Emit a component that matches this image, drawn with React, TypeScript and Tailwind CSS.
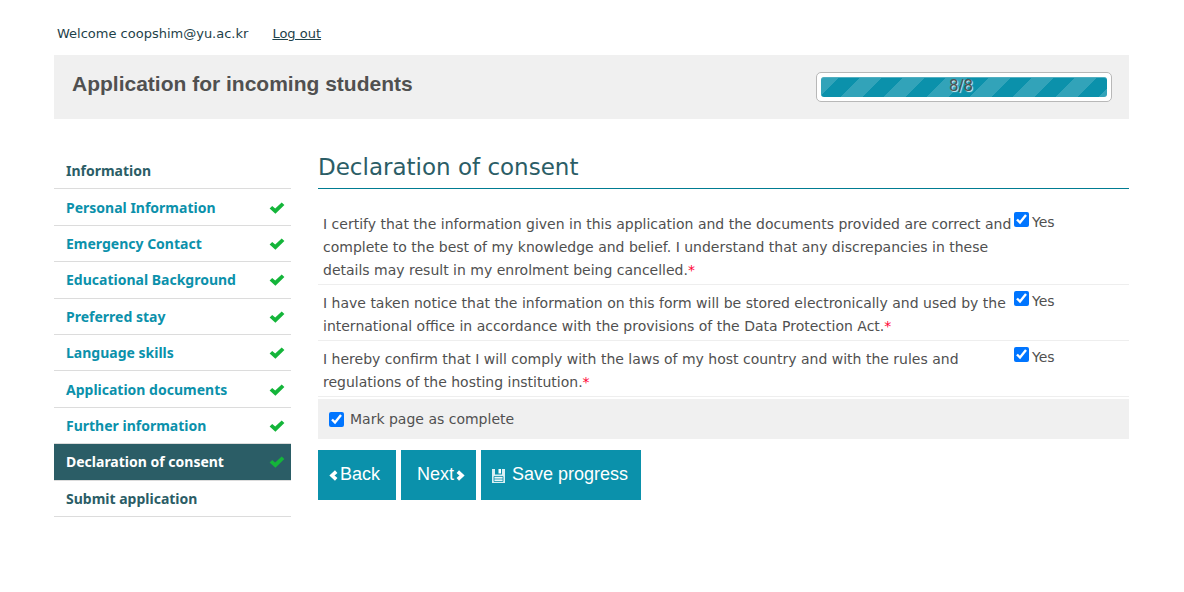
import React from "react";

const steps: { label: string; state: "plain" | "done" | "current" }[] = [
  { label: "Information", state: "plain" },
  { label: "Personal Information", state: "done" },
  { label: "Emergency Contact", state: "done" },
  { label: "Educational Background", state: "done" },
  { label: "Preferred stay", state: "done" },
  { label: "Language skills", state: "done" },
  { label: "Application documents", state: "done" },
  { label: "Further information", state: "done" },
  { label: "Declaration of consent", state: "current" },
  { label: "Submit application", state: "plain" },
];

const stepColors = {
  plain: "text-[#2b5d66]",
  done: "text-[#0b91ab]",
  current: "bg-[#2b5d66] text-white",
};

const consents = [
  {
    id: "consent-correct",
    text: "I certify that the information given in this application and the documents provided are correct and complete to the best of my knowledge and belief. I understand that any discrepancies in these details may result in my enrolment being cancelled.",
  },
  {
    id: "consent-data",
    text: "I have taken notice that the information on this form will be stored electronically and used by the international office in accordance with the provisions of the Data Protection Act.",
  },
  {
    id: "consent-laws",
    text: "I hereby confirm that I will comply with the laws of my host country and with the rules and regulations of the hosting institution.",
  },
];

function CheckMark() {
  return (
    <svg viewBox="0 0 16 12" className="mt-px h-3 w-4 shrink-0" aria-hidden="true">
      <path d="M0.6 6.4 3.2 4.1 6.2 6.6 12.7 0.6 15.4 2.9 6.4 11.7Z" fill="#14b53a" />
    </svg>
  );
}

function Chevron({ flip = false }: { flip?: boolean }) {
  return (
    <svg viewBox="0 0 9 11" className={flip ? "mt-[3px] h-[11px] w-[9px] rotate-180" : "mt-[3px] h-[11px] w-[9px]"} aria-hidden="true">
      <path d="M7.2 1.6 3 5.5 7.2 9.4" fill="none" stroke="#fff" strokeWidth="3.6" />
    </svg>
  );
}

function Disk() {
  return (
    <svg viewBox="0 0 13 14" className="mt-1 h-[14px] w-[13px]" aria-hidden="true">
      <path d="M0 0H3V5.5H10V0H13V14H0Z" fill="#d9eff3" />
      <path d="M6.5 0H9V4.5H6.5Z" fill="#fff" />
      <path d="M2 7.5H11V12.5H2Z" fill="#e8f6f8" stroke="#0b91ab" strokeWidth="0.8" />
      <path d="M2 10H11" stroke="#0b91ab" strokeWidth="0.8" />
    </svg>
  );
}

const buttonClass =
  "flex h-[50px] items-center bg-[#0b91ab] pb-[2px] font-['Liberation_Sans',sans-serif] text-[18px] text-white";

export default function App() {
  return (
    <div className="bg-white pt-[23px] pr-[55px] pb-8 pl-[54px] font-['DejaVu_Sans',Verdana,sans-serif] text-[14px] text-[#505050]">
      <div className="flex gap-6 px-[3px] text-[13px] leading-[22px] text-[#1e4149]">
        <span>Welcome coopshim@yu.ac.kr</span>
        <a href="#logout" className="underline">
          Log out
        </a>
      </div>

      <header className="mt-[10px] flex h-16 items-start justify-between bg-[#f0f0f0] pr-[17px] pl-[18px]">
        <h1 className="pt-4 font-['Liberation_Sans',sans-serif] text-[21px] leading-[26px] font-bold">
          Application for incoming students
        </h1>
        <div className="mt-[17px] h-[30px] w-[296px] rounded-[5px] border border-[#b8b8b8] bg-white p-1">
          <div
            role="progressbar"
            aria-label="Application progress"
            aria-valuemin={0}
            aria-valuemax={8}
            aria-valuenow={8}
            className="h-5 rounded-[3px] border-t border-[#51afc1] bg-[#0b91ab] bg-[linear-gradient(135deg,rgba(255,255,255,0.16)_25%,transparent_25%,transparent_50%,rgba(255,255,255,0.16)_50%,rgba(255,255,255,0.16)_75%,transparent_75%)] bg-size-[43px_43px] bg-position-[-4px_0px] pr-[6px] text-center text-[15px] leading-4 [text-shadow:1px_1px_1px_#e6f4f6]"
          >
            8/8
          </div>
        </div>
      </header>

      <div className="mt-[34px] flex items-start gap-[27px]">
        <nav className="w-[237px] shrink-0 font-['Noto_Sans',sans-serif] font-bold">
          <ul className="grid min-h-[364px] auto-rows-fr">
            {steps.map((step) => (
              <li key={step.label} className="flex border-b border-[#dcdcdc]">
                <a
                  href="#step"
                  aria-current={step.state === "current" ? "page" : undefined}
                  className={`flex flex-1 items-center justify-between pr-[6px] pl-3 ${stepColors[step.state]}`}
                >
                  {step.label}
                  {step.state !== "plain" && <CheckMark />}
                </a>
              </li>
            ))}
          </ul>
        </nav>

        <main className="min-w-0 flex-1">
          <h2 className="border-b border-[#007c92] pb-[6px] text-[23px] leading-[29px] text-[#2b5d66]">
            Declaration of consent
          </h2>
          <form onSubmit={(e) => e.preventDefault()}>
            <div className="pt-[17px]">
              {consents.map((c) => (
                <div key={c.id} className="flex border-b border-[#eeeeee] pt-[7px] pb-[2px]">
                  <p id={c.id} className="w-[696px] shrink-0 pl-[5px] leading-[23px]">
                    {c.text}
                    <span className="text-[#ff0033]">*</span>
                  </p>
                  <label className="flex h-[18px] items-center gap-[3px]">
                    <input
                      type="checkbox"
                      defaultChecked
                      aria-describedby={c.id}
                      className="mb-[6px] size-[15px] accent-[#0075ff]"
                    />
                    Yes
                  </label>
                </div>
              ))}
            </div>
            <label className="mt-[2px] flex h-10 items-center gap-[6px] bg-[#f0f0f0] pl-[11px]">
              <input type="checkbox" defaultChecked className="size-[15px] accent-[#0075ff]" />
              Mark page as complete
            </label>
            <div className="mt-[11px] flex gap-[5px]">
              <button type="button" className={`${buttonClass} gap-[2px] pr-4 pl-[11px]`}>
                <Chevron />
                Back
              </button>
              <button type="button" className={`${buttonClass} gap-[2px] pr-[11px] pl-4`}>
                Next
                <Chevron flip />
              </button>
              <button type="submit" className={`${buttonClass} gap-[7px] pr-[13px] pl-[11px]`}>
                <Disk />
                Save progress
              </button>
            </div>
          </form>
        </main>
      </div>
    </div>
  );
}
